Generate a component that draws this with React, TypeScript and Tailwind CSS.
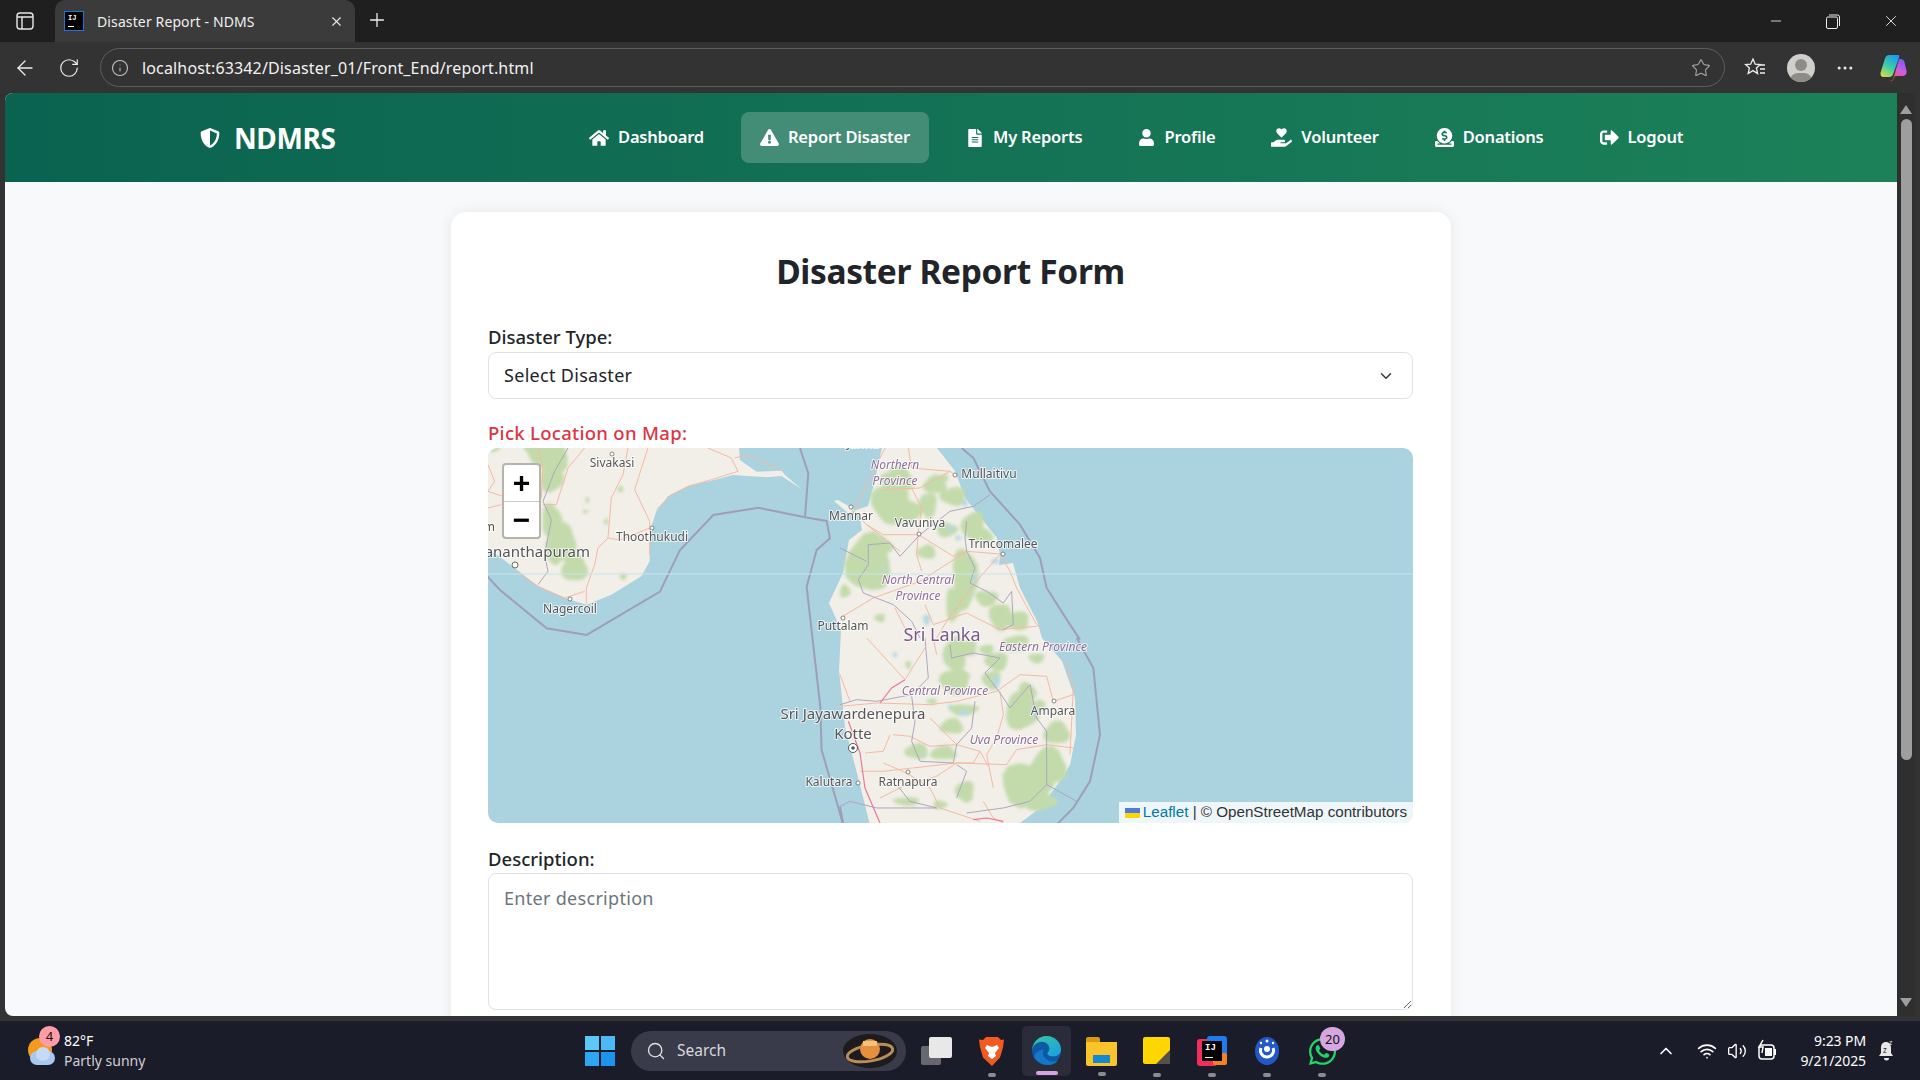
import React from 'react';
import {
  FaDonate,
  FaExclamationTriangle,
  FaFileAlt,
  FaHandHoldingHeart,
  FaHome,
  FaShieldAlt,
  FaSignOutAlt,
  FaUser,
  FaWhatsapp,
} from 'react-icons/fa';
import { ChevronDown, ChevronUp, RotateCw, Search, Info, Star, Volume2, Wifi, X, Plus, Minus, ArrowLeft, MoreHorizontal } from 'lucide-react';

const UI_FONT = { fontFamily: '"Noto Sans", "Open Sans", sans-serif' };

const NAV_ITEMS = [
  { label: 'Dashboard', icon: <FaHome className="text-[20px]" /> },
  { label: 'Report Disaster', icon: <FaExclamationTriangle className="text-[19px]" />, active: true },
  { label: 'My Reports', icon: <FaFileAlt className="text-[18px]" /> },
  { label: 'Profile', icon: <FaUser className="text-[17px]" /> },
  { label: 'Volunteer', icon: <FaHandHoldingHeart className="text-[21px]" /> },
  { label: 'Donations', icon: <FaDonate className="text-[19px]" /> },
  { label: 'Logout', icon: <FaSignOutAlt className="text-[19px]" /> },
];

// map-local coordinates (0,0 = top left of the map)
const CITY_LABELS = [
  { t: 'Jaffna', x: 375, y: -3, s: 12 },
  { t: 'Sivakasi', x: 124, y: 16, s: 12 },
  { t: 'Mullaitivu', x: 501, y: 27, s: 12 },
  { t: 'Mannar', x: 363, y: 69, s: 12 },
  { t: 'Vavuniya', x: 432, y: 76, s: 12 },
  { t: 'Trincomalee', x: 515, y: 97, s: 12 },
  { t: 'Thoothukudi', x: 164, y: 90, s: 12 },
  { t: 'Nagercoil', x: 82, y: 162, s: 12 },
  { t: 'Puttalam', x: 355, y: 179, s: 12 },
  { t: 'Sri Jayawardenepura', x: 365, y: 267, s: 15 },
  { t: 'Kotte', x: 365, y: 287, s: 15 },
  { t: 'Ampara', x: 565, y: 264, s: 12 },
  { t: 'Kalutara', x: 341, y: 335, s: 12 },
  { t: 'Ratnapura', x: 420, y: 335, s: 12 },
];

const REGION_LABELS = [
  { t: 'Northern', x: 407, y: 18 },
  { t: 'Province', x: 407, y: 34 },
  { t: 'North Central', x: 430, y: 133 },
  { t: 'Province', x: 430, y: 149 },
  { t: 'Eastern Province', x: 555, y: 200 },
  { t: 'Central Province', x: 457, y: 244 },
  { t: 'Uva Province', x: 516, y: 293 },
];

const CITY_DOTS = [
  [124, 6],
  [164, 80],
  [82, 151],
  [467, 27],
  [363, 59],
  [431, 86],
  [515, 106],
  [355, 170],
  [566, 253],
  [420, 324],
  [370, 335],
];

// irregular patch, so forest and water don't look like plain ellipses
const blob = ([cx, cy, rx, ry]: number[]) => {
  const pts: string[] = [];
  for (let i = 0; i < 14; i++) {
    const a = (i / 14) * Math.PI * 2;
    const k = 1.08 + 0.14 * Math.sin(cx * 0.7 + cy * 0.3 + i * 1.3);
    pts.push(`${(cx + Math.cos(a) * rx * k).toFixed(1)} ${(cy + Math.sin(a) * ry * k).toFixed(1)}`);
  }
  return `M${pts.join('L')}Z`;
};

const INDIA_GREEN = [
  [189, 30, 50, 45], [215, 110, 32, 45], [160, 20, 25, 25], [230, 50, 30, 50], [214, 240, 28, 45], [244, 310, 42, 55], [284, 385, 36, 38],
  [224, 350, 20, 22], [422, 148, 8, 9], [322, 180, 5, 9], [430, 410, 10, 9], [378, 245, 6, 9], [40, 20, 20, 14], [316, 215, 9, 5],
];

const NORTH_GREEN = [
  [175, 95, 42, 36], [150, 165, 52, 55], [200, 190, 42, 35], [285, 110, 32, 26], [340, 145, 36, 26], [265, 170, 24, 36],
  [400, 235, 32, 42], [435, 265, 22, 20], [85, 345, 62, 82], [118, 295, 36, 28], [260, 312, 26, 20], [375, 390, 36, 84],
  [340, 470, 22, 46], [440, 450, 32, 22], [480, 505, 30, 38], [530, 518, 36, 26], [140, 90, 20, 15], [310, 90, 15, 10],
  [320, 245, 30, 20], [120, 510, 15, 12], [15, 430, 15, 18],
];

const SOUTH_GREEN = [
  [345, 50, 32, 50], [380, 30, 30, 22], [345, 130, 42, 36], [470, 70, 32, 26], [455, 125, 26, 26], [530, 15, 36, 22],
  [545, 220, 47, 52], [560, 165, 26, 30], [600, 200, 15, 15], [650, 285, 36, 32], [370, 215, 42, 16], [335, 265, 32, 22],
  [230, 340, 32, 22], [310, 345, 36, 20], [560, 440, 72, 60], [625, 385, 50, 52], [530, 410, 26, 26], [600, 490, 46, 26],
  [375, 460, 26, 30], [200, 490, 36, 12], [300, 500, 20, 12], [205, 80, 8, 12], [275, 190, 15, 8], [440, 35, 20, 15],
  [590, 60, 22, 14], [510, 20, 20, 20],
];

const NORTH_WATER = [[330, 240, 8, 10], [355, 270, 10, 6], [375, 165, 8, 10], [465, 340, 10, 8], [260, 515, 10, 15], [405, 390, 6, 12], [130, 360, 5, 5]];
const SOUTH_WATER = [[470, 130, 9, 16], [370, 225, 15, 8], [582, 220, 10, 12], [250, 350, 5, 5], [165, 50, 6, 8], [330, 205, 6, 6]];

const INDIA_ROADS = [
  'M444 24L429 104 394 174 384 294 354 324 344 374 319 444 319 494',
  'M504 24L464 149 509 244 509 344',
  'M384 294L420 300 509 264',
  'M314 24L264 84 229 194 189 194',
  'M174 24L189 84 184 174',
  'M529 209L574 164 624 139 694 119 774 94 754 54 684 24',
  'M109 394L174 439 254 474 314 454',
  'M24 74L44 124 24 154 84 174 114 204',
  'M24 204L64 194',
  'M764 54L804 44 905 92',
];

const NORTH_ROADS = [
  'M205 0L215 60 330 70 345 80',
  'M215 120L245 180 235 250 230 320 245 370',
  'M80 230L130 260 235 260 340 325 380 310 480 318',
  'M30 180L80 230 180 310',
  'M480 318L510 370 530 420 590 530 605 545',
  'M380 310L240 400 100 450 0 510',
  'M480 320L400 410 320 520 290 570',
  'M255 470L280 530 380 495 480 545 590 535',
  'M165 480L210 570',
  'M135 0L85 100 45 185',
  'M330 70L240 120 130 125',
];

const SOUTH_ROADS = [
  'M80 0L195 125',
  'M255 30L195 125M280 0L290 50',
  'M0 205L110 195 270 200 350 190 470 160',
  'M270 240L350 320 420 340 400 375 350 375',
  'M160 290L210 295 270 325 350 320',
  'M75 345L130 340 150 290',
  'M350 375L500 380 530 335 620 320 700 330',
  'M480 160L490 230 470 300 440 350 460 450',
  'M470 160L540 110 620 115 640 190 700 170',
  'M680 70L700 150 695 250 690 350',
  'M130 375L200 405 270 450 300 510 420 550',
  'M350 375L290 415 200 440 120 480',
  'M60 400L130 400 350 375',
  'M430 490L460 540 490 555',
  'M420 340L445 385M0 110L30 190',
];

const NORTH_BORDERS =
  'M0 300L80 340M85 290L150 285 180 325 240 260 330 190 400 175 450 140M85 290L85 350 55 395 70 435 160 470 215 520 240 570M380 220L375 270 380 310 405 360 390 405 440 430 490 465 515 430 520 530 490 545';

const SOUTH_BORDERS =
  'M255 0L265 120 215 170 110 190 50 185 0 200M330 20L335 60 400 45 480 60 435 105 480 165 510 210 570 140 590 240 620 280 620 440 710 490M215 175L225 250 215 310 240 370 340 375 350 320 395 270 405 190M350 380L380 400 350 480M170 440L210 490 290 510 110 510 30 490 0 505M620 440L570 490 490 510 380 525';

const MapArt: React.FC = () => (
  <svg className="absolute inset-0" width="925" height="375" viewBox="0 0 925 375">
    <defs>
      <filter id="soft" x="-5%" y="-5%" width="110%" height="110%">
        <feGaussianBlur stdDeviation="0.45" />
      </filter>
      <filter id="softer" x="-5%" y="-5%" width="110%" height="110%">
        <feGaussianBlur stdDeviation="1.4" />
      </filter>
    </defs>
    <rect width="925" height="375" fill="#aad3df" />

    <g filter="url(#soft)">
      {/* land: India is drawn in a 3x crop, Sri Lanka straight in map pixels */}
      <g transform="translate(-8,-8) scale(0.3333)">
        <path
          d="M0 0L775 0 780 60 830 95 905 92 915 105 965 148 905 108 860 112 760 105 704 119 624 139 564 169 529 214 509 274 509 364 484 409 394 464 319 494 254 474 174 439 104 384 24 324 0 305Z"
          fill="#f2efe9"
        />
      </g>
      <path
        d="M395 -5L445 -5 460 14 467 23 477 50 509 90 512 107 511 117 525 115 532 140 549 173 554 190 574 213 587 250 588 287 582 317 572 333 552 360 532 375 532 385 384 385 370 329 357 279 351 222 353 182 341 155 355 125 361 92 374 82 372 70 364 60 350 52 346 53 360 65 380 58 385 40Z"
        fill="#f2efe9"
      />
    </g>

    <g filter="url(#softer)" fill="#c3dbab">
      <g transform="translate(-8,-8) scale(0.3333)">
        {INDIA_GREEN.map((b, i) => (
          <path key={i} d={blob(b)} />
        ))}
      </g>
      <g transform="translate(352,0) scale(0.3333)">
        {NORTH_GREEN.map((b, i) => (
          <path key={i} d={blob(b)} />
        ))}
        {NORTH_WATER.map((b, i) => (
          <path key={i} d={blob(b)} fill="#b5d8e4" />
        ))}
      </g>
      <g transform="translate(352,190) scale(0.3333)">
        {SOUTH_GREEN.map((b, i) => (
          <path key={i} d={blob(b)} />
        ))}
        {SOUTH_WATER.map((b, i) => (
          <path key={i} d={blob(b)} fill="#b5d8e4" />
        ))}
      </g>
    </g>

    <g filter="url(#soft)" fill="none">
      <g transform="translate(-8,-8) scale(0.3333)">
        {INDIA_ROADS.map((d, i) => (
          <path key={i} d={d} stroke="#f5b9a2" strokeWidth="3" />
        ))}
        <path d="M264 24L224 94 189 184 214 239 194 344 204 394 174 434" stroke="#aca6bf" strokeWidth="3" />
        <path
          d="M0 385L60 450 200 565 320 585 540 455 600 330 700 225 835 203 975 232 1040 243 1050 295 1010 330 980 440 1005 660 1021 800 1025 930 1080 1120 1090 1160"
          stroke="#a09dba"
          strokeWidth="6"
        />
        <path d="M960 24L985 100 975 232" stroke="#a09dba" strokeWidth="6" />
      </g>
      <g transform="translate(352,0) scale(0.3333)">
        {NORTH_ROADS.map((d, i) => (
          <path key={i} d={d} stroke="#f5b9a2" strokeWidth="3" />
        ))}
        <path d={NORTH_BORDERS} stroke="#aca6bf" strokeWidth="3" />
        <path d="M365 0L400 30 450 130 540 230 600 330 620 420 690 530 720 575" stroke="#a09dba" strokeWidth="6" />
      </g>
      <g transform="translate(352,190) scale(0.3333)">
        {SOUTH_ROADS.map((d, i) => (
          <path key={i} d={d} stroke="#f5b9a2" strokeWidth="3" />
        ))}
        <path d={SOUTH_BORDERS} stroke="#aca6bf" strokeWidth="3" />
        <path d="M120 195L155 150 195 125M25 250L60 345 75 450 120 555M400 545L440 540 490 550" stroke="#e8789a" strokeWidth="3.5" />
        <path d="M710 0L760 90 780 290 750 430 700 510 650 560" stroke="#a09dba" strokeWidth="6" />
        <path d="M0 505L10 560" stroke="#a09dba" strokeWidth="6" />
      </g>
    </g>

    <line x1="0" y1="126" x2="925" y2="126" stroke="#c6e4ec" strokeWidth="1" />

    {CITY_DOTS.map(([cx, cy], i) => (
      <circle key={i} cx={cx} cy={cy} r="2" fill="#fff" stroke="#6b6b6b" strokeWidth="0.8" />
    ))}
    <circle cx="365" cy="300" r="4.5" fill="#fff" stroke="#555" strokeWidth="1" />
    <circle cx="365" cy="300" r="1.8" fill="#555" />
    <circle cx="27" cy="117" r="3" fill="#fff" stroke="#666" strokeWidth="1" />

    <g style={UI_FONT} textAnchor="middle" dominantBaseline="middle" paintOrder="stroke" strokeLinejoin="round">
      {CITY_LABELS.map(l => (
        <text key={l.t} x={l.x} y={l.y} fontSize={l.s} fill="#555" stroke="#fff" strokeOpacity="0.75" strokeWidth="2">
          {l.t}
        </text>
      ))}
      {REGION_LABELS.map((l, i) => (
        <text key={i} x={l.x} y={l.y} fontSize="12" fontStyle="italic" fill="#8d6e98" stroke="#fff" strokeOpacity="0.75" strokeWidth="2">
          {l.t}
        </text>
      ))}
      <text x="454" y="188" fontSize="18" fill="#77598a" stroke="#fff" strokeOpacity="0.75" strokeWidth="2">
        Sri Lanka
      </text>
      <text x="102" y="105" fontSize="15" textAnchor="end" fill="#555" stroke="#fff" strokeOpacity="0.75" strokeWidth="2">
        ananthapuram
      </text>
      <text x="7" y="80" fontSize="12" textAnchor="end" fill="#555" stroke="#fff" strokeOpacity="0.75" strokeWidth="2">
        m
      </text>
    </g>
  </svg>
);

const EdgeIcon: React.FC = () => (
  <svg width="31" height="31" viewBox="0 0 32 32">
    <defs>
      <linearGradient id="edgeA" x1="0" y1="0" x2="1" y2="1">
        <stop offset="0" stopColor="#36c9a0" />
        <stop offset="1" stopColor="#1b9de2" />
      </linearGradient>
    </defs>
    <circle cx="16" cy="16" r="15" fill="#0c59a4" />
    <path d="M1 16C2 6 9 1 16 1c9 0 15 7 15 14 0 5-4 7-8 7-3 0-6-1-6-3 0-1 2-2 2-5 0-4-4-7-8-7-5 0-9 4-10 9Z" fill="url(#edgeA)" />
    <path d="M3 22c3 6 9 9 15 9 4 0 8-2 10-5-4 2-9 2-12-1-3-2-5-6-3-10-4 0-8 3-10 7Z" fill="#1477c8" />
  </svg>
);

const Taskbar: React.FC = () => (
  <div className="h-[59px] flex items-center bg-[#1b1c29] text-white relative" style={UI_FONT}>
    {/* weather */}
    <div className="w-[585px] h-full flex items-center">
      <div className="relative w-[34px] h-[30px] ml-[27px] mr-[3px]">
        <div className="absolute left-[1px] top-[2px] w-[24px] h-[24px] rounded-full bg-[#f59b1c]" />
        <div className="absolute left-[3px] top-[15px] w-[25px] h-[14px] rounded-full bg-[#a9c8f0]" />
        <div className="absolute left-[9px] top-[11px] w-[14px] h-[14px] rounded-full bg-[#c6daf6]" />
        <div className="absolute left-[12px] top-[-10px] w-[21px] h-[21px] rounded-full bg-[#ff9ca8] text-[#111] text-[13px] leading-[21px] text-center">
          4
        </div>
      </div>
      <div className="text-[14px] leading-[20px]">
        <div>82°F</div>
        <div className="text-[#d0d0d4]">Partly sunny</div>
      </div>
    </div>

    {/* windows logo */}
    <div className="grid grid-cols-2 gap-[2px] w-[30px] h-[30px] mr-[16px]">
      <span className="bg-[#5cc8f7]" />
      <span className="bg-[#4ab9f5]" />
      <span className="bg-[#2fa6f1]" />
      <span className="bg-[#1c93ec]" />
    </div>

    {/* search */}
    <div className="w-[275px] h-[40px] rounded-full bg-[#3a3b4a] flex items-center pl-[15px] pr-[9px] mr-[15px]">
      <Search size={20} strokeWidth={1.6} className="text-[#e4e4e8]" />
      <span className="ml-[11px] text-[15.5px] text-[#d8d8dc]">Search</span>
      <svg className="ml-auto" width="54" height="34" viewBox="0 0 54 34">
        <ellipse cx="27" cy="17" rx="27" ry="17" fill="#1d1a20" />
        <ellipse cx="27" cy="19" rx="23" ry="8" fill="none" stroke="#b78e57" strokeWidth="3" transform="rotate(-10 27 19)" />
        <circle cx="27" cy="15" r="10" fill="#e58f3f" />
        <rect x="20" y="7" width="14" height="5" fill="#f5c27c" />
      </svg>
    </div>

    {/* task view */}
    <div className="relative w-[32px] h-[28px] mr-[26px]">
      <div className="absolute left-0 top-[9px] w-[20px] h-[19px] rounded-[2px] bg-[#66676f]" />
      <div className="absolute left-[8px] top-0 w-[23px] h-[21px] rounded-[2px] bg-[#e8e8e8]" />
    </div>

    {/* pinned apps */}
    <div className="relative w-[26px] h-[30px] mr-[17px]">
      <svg width="26" height="30" viewBox="0 0 26 30">
        <path d="M7 1h12l3 3 3-.5-1 8-3 10L13 30 4 21.5 1 11 0 3.5 4 4Z" fill="#f25a1f" />
        <path d="M8 9l5 2 5-2 2 3-4 5 1 3-4 3-4-3 1-3-4-5Z" fill="#fff" />
      </svg>
      <span className="absolute left-[9px] top-[37px] w-[8px] h-[4px] rounded-full bg-[#8b8b90]" />
    </div>
    <div className="relative w-[49px] h-[50px] mr-[15px] rounded-[5px] bg-[#2b2c3a] flex items-center justify-center">
      <EdgeIcon />
      <span className="absolute left-[14px] bottom-[1px] w-[22px] h-[4px] rounded-full bg-[#d8a3e2]" />
    </div>
    <div className="relative w-[31px] h-[28px] mr-[26px]">
      <div className="absolute left-0 top-0 w-[14px] h-[8px] rounded-t-[2px] bg-[#d99a11]" />
      <div className="absolute left-0 top-[5px] w-[31px] h-[24px] rounded-b-[2px] bg-[#fbc42d]" />
      <div className="absolute left-[7px] top-[18px] w-[17px] h-[8px] bg-[#1488d0]" />
      <span className="absolute left-[12px] top-[35px] w-[8px] h-[4px] rounded-full bg-[#8b8b90]" />
    </div>
    <div className="relative w-[27px] h-[27px] mr-[27px]">
      <div className="w-full h-full rounded-[2px] bg-[#ffd600]" />
      <svg className="absolute right-0 bottom-0" width="14" height="14" viewBox="0 0 14 14">
        <path d="M14 0V14H0Z" fill="#55504a" />
      </svg>
      <span className="absolute left-[10px] top-[36px] w-[8px] h-[4px] rounded-full bg-[#8b8b90]" />
    </div>
    <div className="relative w-[30px] h-[30px] mr-[28px]">
      <div className="absolute left-0 top-[3px] w-[20px] h-[27px] rounded-[3px] bg-[#f0305a]" />
      <div className="absolute right-0 top-0 w-[20px] h-[22px] rounded-[3px] bg-[#1f7cf0]" />
      <div className="absolute right-0 bottom-[1px] w-[14px] h-[12px] rounded-[2px] bg-[#f58220]" />
      <div className="absolute left-[5px] top-[5px] w-[20px] h-[20px] bg-black text-white text-[9px] font-bold leading-[11px] pl-[3px] pt-[2px]" style={{ fontFamily: '"Liberation Mono", monospace' }}>
        IJ
        <div className="w-[8px] h-[1.5px] bg-white mt-[3px]" />
      </div>
      <span className="absolute left-[11px] top-[37px] w-[8px] h-[4px] rounded-full bg-[#8b8b90]" />
    </div>
    <div className="relative w-[24px] h-[30px] mr-[28px]">
      <svg width="24" height="30" viewBox="0 0 24 30">
        <ellipse cx="12" cy="15" rx="12" ry="14" fill="#2258c8" />
        <path d="M6 12a6.5 6.5 0 1 0 12 0" fill="none" stroke="#fff" strokeWidth="3" />
        <circle cx="12" cy="13" r="3" fill="#fff" />
        <circle cx="12" cy="5" r="1.5" fill="#fff" />
        <circle cx="6" cy="7" r="1.2" fill="#fff" />
        <circle cx="18" cy="7" r="1.2" fill="#fff" />
      </svg>
      <span className="absolute left-[8px] top-[37px] w-[8px] h-[4px] rounded-full bg-[#8b8b90]" />
    </div>
    <div className="relative w-[31px] h-[30px]">
      <FaWhatsapp className="text-[31px] text-[#25d366]" />
      <div className="absolute left-[13px] top-[-9px] w-[25px] h-[24px] rounded-full bg-[#d7a6e0] text-[#111] text-[13px] leading-[24px] text-center">
        20
      </div>
      <span className="absolute left-[11px] top-[37px] w-[8px] h-[4px] rounded-full bg-[#8b8b90]" />
    </div>

    {/* tray */}
    <div className="ml-[318px] flex items-center">
      <ChevronUp size={20} strokeWidth={2} className="mr-[21px]" />
      <Wifi size={20} strokeWidth={2} className="mr-[10px]" />
      <Volume2 size={20} strokeWidth={1.6} className="mr-[9px]" />
      <svg className="mr-[12px]" width="22" height="24" viewBox="0 0 22 24" fill="none" stroke="#fff" strokeWidth="1.5">
        <rect x="3" y="6" width="15" height="14" rx="3" />
        <rect x="18" y="10" width="2" height="6" fill="#fff" stroke="none" />
        <rect x="9" y="9" width="7" height="8" fill="#fff" stroke="none" />
        <path d="M7 1L3 8h4l-1 6" />
      </svg>
      <div className="w-[76px] text-right text-[14px] leading-[20px] tracking-[-0.1px]">
        <div>9:23 PM</div>
        <div>9/21/2025</div>
      </div>
      <svg className="ml-[12px]" width="17" height="24" viewBox="0 0 17 24" fill="#e8e8e8">
        <path d="M8 3c-3 0-5 2-5 6v5l-2 3h14l-2-3V9c0-4-2-6-5-6ZM6 19a2.5 2.5 0 0 0 5 0Z" />
        <text x="5" y="14" fontSize="8" fill="#1b1c29" style={UI_FONT}>z</text>
        <text x="11" y="6" fontSize="7" style={UI_FONT}>z</text>
      </svg>
    </div>
  </div>
);

const App: React.FC = () => {
  return (
    <div className="w-[1920px] h-[1080px] overflow-hidden flex flex-col bg-[#333333]" style={UI_FONT}>
      {/* Tab strip */}
      <div className="h-[42px] flex bg-[#1f1f1f] text-white">
        <div className="w-[55px] flex items-center pl-[16px]">
          <svg width="18" height="18" viewBox="0 0 18 18" fill="none" stroke="#e8e8e8" strokeWidth="1.4">
            <rect x="1" y="1" width="16" height="16" rx="3" />
            <path d="M1 5h16M6 5v12" />
          </svg>
        </div>
        <div className="w-[300px] flex items-center bg-[#3b3b3b] rounded-t-[10px] pl-[9px]">
          <div className="w-[20px] h-[20px] border border-[#1c74d8] bg-black text-white text-[7px] font-bold leading-[8px] pl-[3px] pt-[2px]" style={{ fontFamily: '"Liberation Mono", monospace' }}>
            IJ
            <div className="w-[6px] h-[1px] bg-white mt-[4px]" />
          </div>
          <span className="ml-[13px] text-[14px] tracking-[0.12px] text-[#f0f0f0]">Disaster Report - NDMS</span>
          <X size={15} strokeWidth={1.8} className="ml-auto mr-[11px] text-[#e8e8e8]" />
        </div>
        <Plus size={22} strokeWidth={1.4} className="ml-[11px] mt-[9px] text-[#f0f0f0]" />
        <div className="ml-auto flex items-center">
          <Minus size={16} strokeWidth={1.3} className="mr-[42px] text-[#eee]" />
          <svg className="mr-[42px]" width="14" height="15" viewBox="0 0 14 15" fill="none" stroke="#eee" strokeWidth="1">
            <rect x="0.5" y="3" width="11" height="11.5" rx="1.5" />
            <path d="M3 1h8.5A2 2 0 0 1 13.5 3v9" />
          </svg>
          <X size={18} strokeWidth={1.2} className="mr-[20px] text-[#eee]" />
        </div>
      </div>

      {/* Address bar row */}
      <div className="h-[51px] flex items-center bg-[#333333] text-white">
        <ArrowLeft size={24} strokeWidth={1.3} className="ml-[13px] text-[#eee]" />
        <RotateCw size={22} strokeWidth={1.3} className="ml-[21px] text-[#eee]" />
        <div className="ml-[20px] w-[1625px] h-[39px] rounded-full border border-[#5e5e5e] flex items-center pl-[10px]">
          <Info size={18} strokeWidth={1.4} className="text-[#c4c4c4]" />
          <span className="ml-[13px] text-[16px] tracking-[0.15px] text-[#f2f2f2]">localhost:63342/Disaster_01/Front_End/report.html</span>
          <Star size={20} strokeWidth={1.3} className="ml-auto mr-[13px] text-[#a8a8a8]" />
        </div>
        <svg className="ml-[19px]" width="22" height="22" viewBox="0 0 22 22" fill="none" stroke="#eee" strokeWidth="1.3">
          <path d="M9 2l2.2 5.2 5 .4-3.8 3.4 1.2 5.5L9 13.6 4.2 16.5 5.4 11 1.6 7.6l5-.4ZM16 8h5M16 12h5M16 16h5" />
        </svg>
        <div className="relative ml-[21px] w-[28px] h-[28px] rounded-full bg-[#d0cfcc] overflow-hidden">
          <div className="absolute left-[8px] top-[5px] w-[12px] h-[12px] rounded-full bg-[#8d8c89]" />
          <div className="absolute left-[3px] top-[19px] w-[22px] h-[16px] rounded-full bg-[#8d8c89]" />
        </div>
        <MoreHorizontal size={20} strokeWidth={1.6} className="ml-[20px] text-[#eee]" />
        <svg className="ml-[25px]" width="27" height="27" viewBox="0 0 27 27">
          <defs>
            <linearGradient id="copA" x1="0.7" y1="0" x2="0.2" y2="1">
              <stop offset="0" stopColor="#1b9cf0" />
              <stop offset="0.55" stopColor="#3fd0a0" />
              <stop offset="1" stopColor="#d8d84a" />
            </linearGradient>
            <linearGradient id="copB" x1="0.7" y1="0" x2="0.3" y2="1">
              <stop offset="0" stopColor="#7a5cf0" />
              <stop offset="0.5" stopColor="#d65ae0" />
              <stop offset="1" stopColor="#f4553a" />
            </linearGradient>
          </defs>
          <path d="M19 5h1.500c2 0 3.500 1.200 4 3l2 9c.6 2.500-1 5-3.500 5H15l-2 4c-.6 1-1.600 1-3 1h-1c3 0 4-1 4.500-3Z" fill="url(#copB)" />
          <path d="M9 1h9c1.500 0 1.500 1 1 2.500l-6 17c-.6 1.600-2 2.500-3.600 2.500H3.500C1.200 23 0 21 .6 18.500L5 4.500C5.600 2.500 7 1 9 1Z" fill="url(#copA)" />
        </svg>
      </div>

      {/* Page and scrollbar */}
      <div className="h-[923px] flex pl-[5px] pr-[5px]">
        <div className="w-[1892px] h-full overflow-hidden rounded-tl-[8px] rounded-bl-[8px] bg-[#f8f9fa]">
          <nav className="h-[89px] flex items-center pl-[195px] bg-[linear-gradient(90deg,#0a6350,#1c8159)] text-white">
            <FaShieldAlt className="text-[20px]" />
            <span className="ml-[14px] w-[336px] text-[28px] font-bold tracking-[-0.4px]">NDMRS</span>
            <div className="flex items-center gap-[18px]">
              {NAV_ITEMS.map(item => (
                <a
                  key={item.label}
                  className={`h-[51px] flex items-center gap-[9px] px-[19px] rounded-[8px] text-[16.5px] font-semibold tracking-[-0.2px] ${item.active ? 'bg-[#438d77]' : ''}`}
                >
                  {item.icon}
                  {item.label}
                </a>
              ))}
            </div>
          </nav>

          <main className="flex justify-center pt-[30px]">
            <div className="w-[1000px] h-[830px] rounded-[15px] bg-white pl-[37px] pr-[38px] pt-[35px] text-[#212529] shadow-[0_0_15px_rgba(0,0,0,0.08)]">
              <h2 className="text-center text-[33.5px] leading-[48px] font-bold tracking-[-0.35px]">Disaster Report Form</h2>

              <label className="block mt-[30px] mb-[3px] text-[18.5px] leading-[24px] font-medium">Disaster Type:</label>
              <div className="h-[47px] flex items-center justify-between pl-[15px] pr-[17px] rounded-[8px] border border-[#dee2e6] text-[18px] tracking-[0.3px]">
                Select Disaster
                <ChevronDown size={18} strokeWidth={2} className="text-[#343a40]" />
              </div>

              <label className="block mt-[22px] mb-[3px] text-[18.5px] leading-[24px] font-medium tracking-[0.3px] text-[#dc3545]">Pick Location on Map:</label>
              <div className="relative h-[375px] rounded-[10px] overflow-hidden">
                <MapArt />
                <div className="absolute left-[14px] top-[15px] w-[39px] h-[76px] rounded-[4px] border-2 border-[#b5b3ab] bg-white bg-clip-padding flex flex-col text-black" style={{ fontFamily: '"Liberation Sans", sans-serif' }}>
                  <span className="h-[37px] flex items-center justify-center border-b border-[#ccc] text-[30px] font-bold leading-none">+</span>
                  <span className="flex-1 flex items-center justify-center text-[30px] font-bold leading-none">−</span>
                </div>
                <div className="absolute right-0 bottom-0 h-[21px] flex items-center px-[6px] bg-white/80 text-[15.2px] text-[#333]" style={{ fontFamily: '"Liberation Sans", Arial, sans-serif' }}>
                  <svg className="mr-[3px]" width="15" height="10" viewBox="0 0 15 10">
                    <rect width="15" height="5" fill="#4c7be1" />
                    <rect y="5" width="15" height="5" fill="#ffd500" />
                  </svg>
                  <span className="text-[#0078a8]">Leaflet</span>
                  <span>&nbsp;| © OpenStreetMap contributors</span>
                </div>
              </div>

              <label className="block mt-[24px] mb-[2px] text-[18.5px] leading-[24px] font-medium">Description:</label>
              <textarea
                placeholder="Enter description"
                className="block w-full h-[137px] pl-[15px] pt-[11px] rounded-[8px] border border-[#dee2e6] text-[18px] tracking-[0.3px] placeholder:text-[#6c757d] outline-none"
              />
            </div>
          </main>
        </div>

        {/* scrollbar */}
        <div className="w-[18px] flex flex-col items-center bg-[#2f2f2f]">
          <div className="mt-[12px] w-0 h-0 border-x-[6px] border-x-transparent border-b-[9px] border-b-[#9e9e9e]" />
          <div className="mt-[5px] w-[11px] h-[641px] rounded-full bg-[#9e9e9e]" />
          <div className="mt-auto mb-[9px] w-0 h-0 border-x-[6px] border-x-transparent border-t-[9px] border-t-[#9e9e9e]" />
        </div>
      </div>

      <div className="h-[5px] bg-[#333333]" />
      <Taskbar />
    </div>
  );
};

export default App;
